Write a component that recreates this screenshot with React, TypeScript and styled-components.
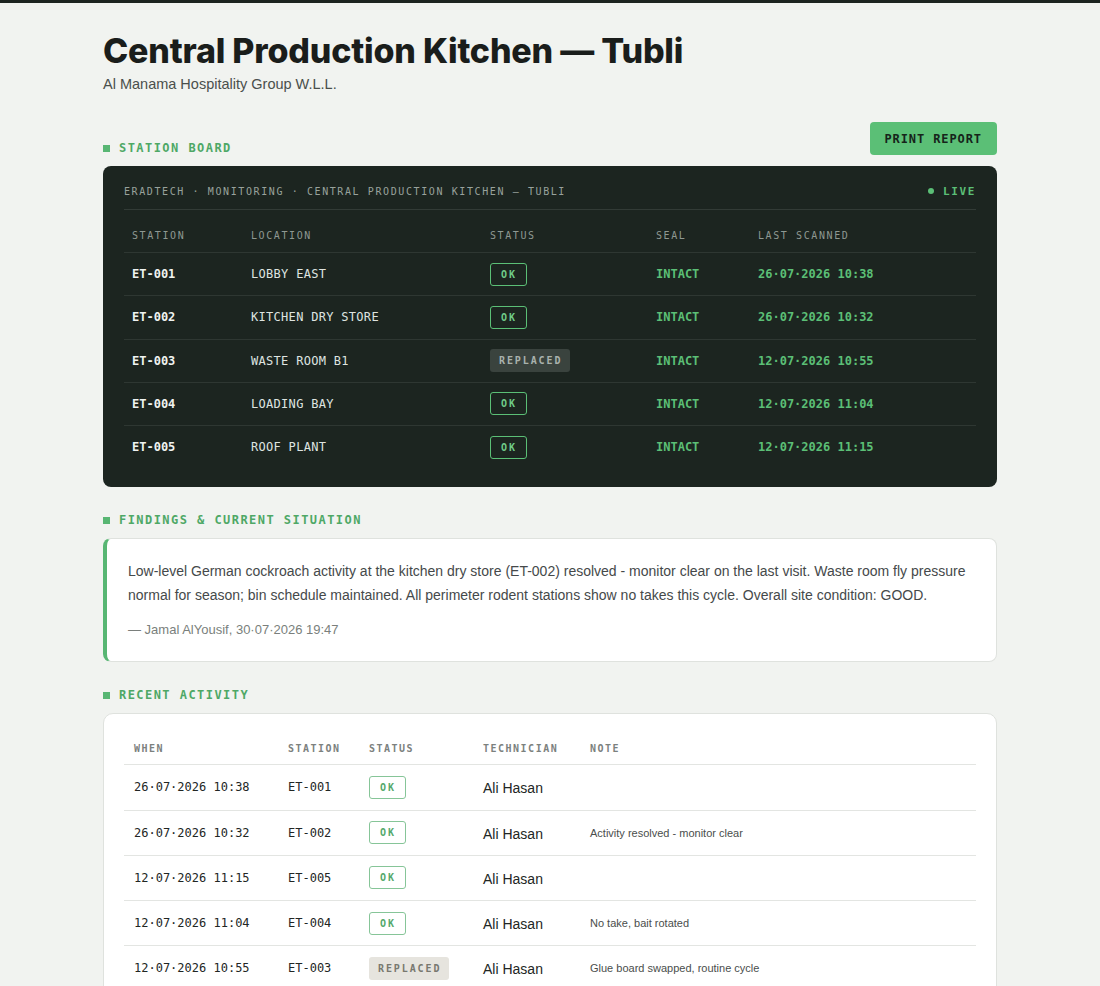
import React from "react";
import styled, { createGlobalStyle } from "styled-components";

const MONO = `"DejaVu Sans Mono", "Liberation Mono", monospace`;
const SANS = `"Liberation Sans", Arial, sans-serif`;

const Global = createGlobalStyle`
  html, body { margin: 0; padding: 0; }
  body {
    background: #f1f3f0;
    font-family: ${SANS};
    color: #1b1f1c;
  }
`;

const TopBar = styled.div`
  height: 3px;
  background: #1c2420;
`;

const Page = styled.main`
  max-width: 894px;
  margin: 0 auto;
  padding: 26px 0 40px;
`;

const Title = styled.h1`
  margin: 0;
  font-family: Inter, "Noto Sans", sans-serif;
  font-weight: 800;
  font-size: 34px;
  line-height: 44px;
  letter-spacing: -0.2px;
  color: #1a1d1b;
`;

const Subtitle = styled.div`
  margin-top: 1px;
  font-size: 14.5px;
  line-height: 20px;
  color: #4a4f4c;
`;

const SectionHead = styled.div<{ $top: number }>`
  display: flex;
  align-items: flex-end;
  justify-content: space-between;
  margin-top: ${(p) => p.$top}px;
  margin-bottom: 11px;
`;

const SectionLabel = styled.div`
  display: flex;
  align-items: center;
  gap: 9px;
  font-family: ${MONO};
  font-weight: 700;
  font-size: 12px;
  line-height: 14px;
  letter-spacing: 1.45px;
  color: #4ea866;
  &::before {
    content: "";
    width: 7px;
    height: 7px;
    background: #58b673;
  }
`;

const PrintButton = styled.button`
  height: 33px;
  padding: 0 15px;
  border: none;
  border-radius: 4px;
  background: #5bbf76;
  color: #16241a;
  font-family: ${MONO};
  font-weight: 700;
  font-size: 12px;
  letter-spacing: 0.9px;
  cursor: pointer;
`;

/* ---------- dark station board ---------- */

const Board = styled.section`
  background: #1c2520;
  border-radius: 8px;
  padding: 14px 21px 19px;
`;

const BoardTop = styled.div`
  display: flex;
  justify-content: space-between;
  align-items: center;
  box-sizing: border-box;
  height: 30px;
  padding-bottom: 7px;
  border-bottom: 1px solid #323b36;
  font-family: ${MONO};
  font-size: 10px;
  letter-spacing: 1.6px;
  color: #98a29c;
`;

const Live = styled.span`
  display: flex;
  align-items: center;
  gap: 9px;
  color: #5bbf76;
  font-weight: 700;
  font-size: 11px;
  letter-spacing: 1.6px;
  &::before {
    content: "";
    width: 6px;
    height: 6px;
    border-radius: 50%;
    background: #5bbf76;
  }
`;

const BoardGrid = "119px 239px 166px 102px 1fr";

const BoardRow = styled.div<{ $head?: boolean }>`
  display: grid;
  grid-template-columns: ${BoardGrid};
  align-items: center;
  box-sizing: border-box;
  height: ${(p) => (p.$head ? 42 : 43.25)}px;
  padding-top: ${(p) => (p.$head ? 8 : 0)}px;
  border-top: ${(p) => (p.$head ? "none" : "1px solid #2e3732")};
  & > * { padding-left: 8px; }
`;

const BoardHeadCell = styled.div`
  font-family: ${MONO};
  font-size: 10px;
  letter-spacing: 1.6px;
  color: #8e9892;
`;

const StationId = styled.div`
  font-family: ${MONO};
  font-weight: 700;
  font-size: 12px;
  color: #f0f3f1;
`;

const Location = styled.div`
  font-family: ${MONO};
  font-size: 12px;
  letter-spacing: 0.3px;
  color: #dfe4e0;
`;

const GreenMono = styled.div`
  font-family: ${MONO};
  font-weight: 700;
  font-size: 12px;
  color: #5bbf76;
`;

const Badge = styled.span<{ $kind: "ok" | "replaced"; $light?: boolean }>`
  display: inline-flex;
  align-items: center;
  height: 23px;
  box-sizing: border-box;
  padding: 0 ${(p) => (p.$kind === "ok" ? 9 : 8)}px 0 ${(p) => (p.$kind === "ok" ? 10 : 9)}px;
  border-radius: 3px;
  font-family: ${MONO};
  font-weight: 700;
  font-size: 10px;
  letter-spacing: 1.9px;
  ${(p) =>
    p.$kind === "ok"
      ? `border: 1px solid ${p.$light ? "#86c598" : "#5bbf76"}; color: ${p.$light ? "#55a96c" : "#6fcb88"};`
      : p.$light
      ? `background: #e6e4de; color: #78786f;`
      : `background: #3a433e; color: #a9b2ad;`}
`;

const BadgeCell = styled.div``;

/* ---------- findings ---------- */

const Findings = styled.section`
  background: #ffffff;
  border: 1px solid #dfe2de;
  border-left: 4px solid #58b673;
  border-radius: 8px;
  padding: 20px 24px 22px 21px;
`;

const FindingsText = styled.p`
  margin: 0;
  font-size: 14px;
  line-height: 24px;
  color: #45494a;
`;

const Signature = styled.div`
  margin-top: 14px;
  font-size: 13px;
  line-height: 18px;
  color: #7a7f7c;
`;

/* ---------- recent activity ---------- */

const ActivityCard = styled.section`
  background: #ffffff;
  border: 1px solid #dfe2de;
  border-radius: 10px;
  padding: 19px 20px 12px;
`;

const ActivityGrid = "154px 81px 114px 107px 1fr";

const ActivityRow = styled.div<{ $head?: boolean }>`
  display: grid;
  grid-template-columns: ${ActivityGrid};
  align-items: center;
  box-sizing: border-box;
  height: ${(p) => (p.$head ? 31 : 45.25)}px;
  border-top: ${(p) => (p.$head ? "none" : "1px solid #e3e5e2")};
  & > * { padding-left: 10px; }
`;

const ActivityHeadCell = styled.div`
  font-family: ${MONO};
  font-weight: 700;
  font-size: 10px;
  letter-spacing: 1.5px;
  color: #7c817e;
`;

const When = styled.div`
  font-family: ${MONO};
  font-weight: 500;
  font-size: 12px;
  color: #222624;
`;

const ActStation = styled.div`
  font-family: ${MONO};
  font-size: 12px;
  color: #222624;
`;

const Tech = styled.div`
  font-size: 14px;
  color: #222624;
  padding-top: 2px;
`;

const Note = styled.div`
  font-size: 11px;
  color: #4a4e4c;
`;

type Status = "ok" | "replaced";

const stations: { id: string; loc: string; status: Status; scanned: string }[] = [
  { id: "ET-001", loc: "LOBBY EAST", status: "ok", scanned: "26·07·2026 10:38" },
  { id: "ET-002", loc: "KITCHEN DRY STORE", status: "ok", scanned: "26·07·2026 10:32" },
  { id: "ET-003", loc: "WASTE ROOM B1", status: "replaced", scanned: "12·07·2026 10:55" },
  { id: "ET-004", loc: "LOADING BAY", status: "ok", scanned: "12·07·2026 11:04" },
  { id: "ET-005", loc: "ROOF PLANT", status: "ok", scanned: "12·07·2026 11:15" },
];

const activity: { when: string; id: string; status: Status; tech: string; note: string }[] = [
  { when: "26·07·2026 10:38", id: "ET-001", status: "ok", tech: "Ali Hasan", note: "" },
  { when: "26·07·2026 10:32", id: "ET-002", status: "ok", tech: "Ali Hasan", note: "Activity resolved - monitor clear" },
  { when: "12·07·2026 11:15", id: "ET-005", status: "ok", tech: "Ali Hasan", note: "" },
  { when: "12·07·2026 11:04", id: "ET-004", status: "ok", tech: "Ali Hasan", note: "No take, bait rotated" },
  { when: "12·07·2026 10:55", id: "ET-003", status: "replaced", tech: "Ali Hasan", note: "Glue board swapped, routine cycle" },
];

const label = (s: Status) => (s === "ok" ? "OK" : "REPLACED");

export default function App() {
  return (
    <>
      <Global />
      <TopBar />
      <Page>
        <Title>Central Production Kitchen — Tubli</Title>
        <Subtitle>Al Manama Hospitality Group W.L.L.</Subtitle>

        <SectionHead $top={28}>
          <SectionLabel>STATION BOARD</SectionLabel>
          <PrintButton>PRINT REPORT</PrintButton>
        </SectionHead>
        <Board>
          <BoardTop>
            <span>ERADTECH · MONITORING · CENTRAL PRODUCTION KITCHEN — TUBLI</span>
            <Live>LIVE</Live>
          </BoardTop>
          <BoardRow $head>
            <BoardHeadCell>STATION</BoardHeadCell>
            <BoardHeadCell>LOCATION</BoardHeadCell>
            <BoardHeadCell>STATUS</BoardHeadCell>
            <BoardHeadCell>SEAL</BoardHeadCell>
            <BoardHeadCell>LAST SCANNED</BoardHeadCell>
          </BoardRow>
          {stations.map((s) => (
            <BoardRow key={s.id}>
              <StationId>{s.id}</StationId>
              <Location>{s.loc}</Location>
              <BadgeCell>
                <Badge $kind={s.status}>{label(s.status)}</Badge>
              </BadgeCell>
              <GreenMono>INTACT</GreenMono>
              <GreenMono>{s.scanned}</GreenMono>
            </BoardRow>
          ))}
        </Board>

        <SectionHead $top={26}>
          <SectionLabel>FINDINGS &amp; CURRENT SITUATION</SectionLabel>
        </SectionHead>
        <Findings>
          <FindingsText>
            Low-level German cockroach activity at the kitchen dry store (ET-002) resolved - monitor clear on the
            last visit. Waste room fly pressure normal for season; bin schedule maintained. All perimeter rodent
            stations show no takes this cycle. Overall site condition: GOOD.
          </FindingsText>
          <Signature>— Jamal AlYousif, 30·07·2026 19:47</Signature>
        </Findings>

        <SectionHead $top={26}>
          <SectionLabel>RECENT ACTIVITY</SectionLabel>
        </SectionHead>
        <ActivityCard>
          <ActivityRow $head>
            <ActivityHeadCell>WHEN</ActivityHeadCell>
            <ActivityHeadCell>STATION</ActivityHeadCell>
            <ActivityHeadCell>STATUS</ActivityHeadCell>
            <ActivityHeadCell>TECHNICIAN</ActivityHeadCell>
            <ActivityHeadCell>NOTE</ActivityHeadCell>
          </ActivityRow>
          {activity.map((a) => (
            <ActivityRow key={a.when}>
              <When>{a.when}</When>
              <ActStation>{a.id}</ActStation>
              <BadgeCell>
                <Badge $kind={a.status} $light>
                  {label(a.status)}
                </Badge>
              </BadgeCell>
              <Tech>{a.tech}</Tech>
              <Note>{a.note}</Note>
            </ActivityRow>
          ))}
        </ActivityCard>
      </Page>
    </>
  );
}
